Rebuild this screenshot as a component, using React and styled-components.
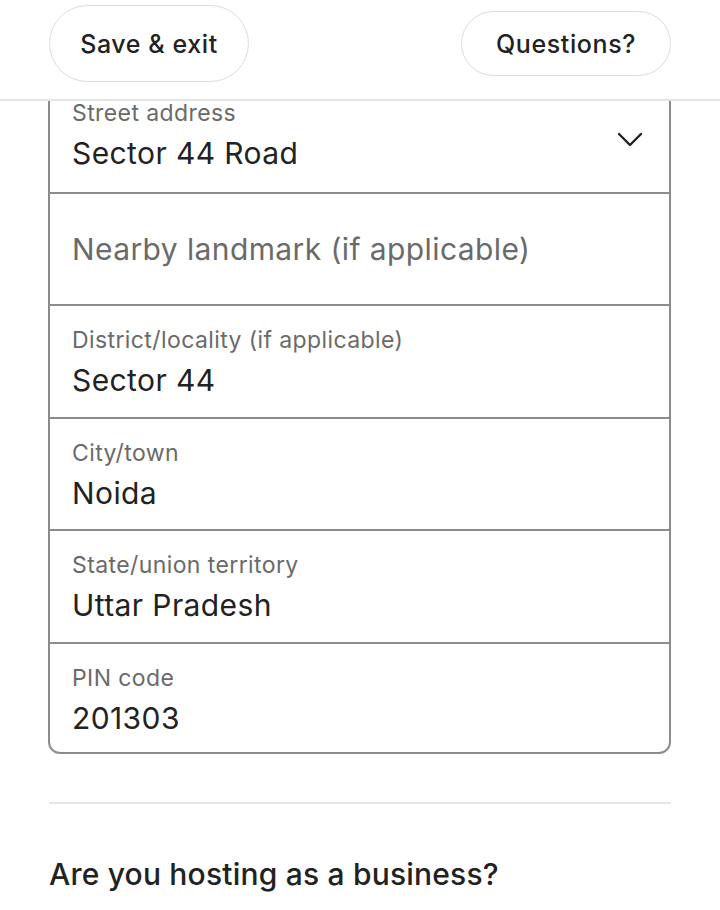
import React from "react";
import styled, { createGlobalStyle } from "styled-components";

const Global = createGlobalStyle`
  html, body { margin: 0; padding: 0; background: #fff; }
  body { font-family: "Inter", "Noto Sans", sans-serif; color: #222; }
  * { box-sizing: border-box; }
`;

const Page = styled.div`
  width: 720px;
  height: 910px;
  overflow: hidden;
  background: #fff;
  display: flex;
  flex-direction: column;
`;

const Header = styled.header`
  height: 101px;
  flex: none;
  display: flex;
  align-items: center;
  justify-content: space-between;
  padding: 0 49px 12px 49px;
  border-bottom: 2px solid #e4e4e4;
`;

const PillButton = styled.button`
  height: ${(p) => p.$h}px;
  width: ${(p) => p.$w}px;
  border: 1.5px solid #dcdcdc;
  border-radius: 40px;
  background: #fff;
  font-family: inherit;
  font-size: 25px;
  font-weight: 500;
  letter-spacing: 0.6px;
  color: #222;
  padding: 0;
`;

const Scroll = styled.div`
  flex: 1;
  overflow: hidden;
  padding: 0 49px 0 48px;
`;

const Content = styled.div`
  margin-top: -24px;
`;

const FormBox = styled.div`
  border: 2px solid #8c8c8c;
  border-radius: 12px;
  overflow: hidden;
`;

const Row = styled.div`
  position: relative;
  height: ${(p) => (p.$last ? 110 : 112.6)}px;
  border-top: ${(p) => (p.$first ? "none" : "2px solid #8c8c8c")};
  padding: 0 22px;
  display: flex;
  flex-direction: column;
  justify-content: ${(p) => (p.$placeholder ? "center" : "flex-start")};
`;

const Label = styled.div`
  margin-top: 21px;
  font-size: 23px;
  letter-spacing: 0.4px;
  color: #6a6a6a;
  line-height: 26px;
`;

const Value = styled.div`
  margin-top: 10px;
  font-size: 30px;
  letter-spacing: 0.4px;
  color: #222;
  line-height: 34px;
`;

const Placeholder = styled.div`
  font-size: 30px;
  letter-spacing: 0.4px;
  color: #6a6a6a;
  line-height: 34px;
`;

const Chevron = styled.svg`
  position: absolute;
  right: 26px;
  top: 53px;
  width: 26px;
  height: 16px;
`;

const Separator = styled.hr`
  margin: 48px 0 0 1px;
  border: none;
  border-top: 2px solid #e4e4e4;
  width: 622px;
`;

const Heading = styled.h2`
  margin: 50px 0 0 1px;
  font-size: 30px;
  font-weight: 500;
  letter-spacing: 0.2px;
  color: #222;
  line-height: 40px;
`;

const fields = [
  { label: "District/locality (if applicable)", value: "Sector 44" },
  { label: "City/town", value: "Noida" },
  { label: "State/union territory", value: "Uttar Pradesh" },
  { label: "PIN code", value: "201303" },
];

export default function App() {
  return (
    <>
      <Global />
      <Page>
        <Header>
          <PillButton $w={200} $h={77}>Save &amp; exit</PillButton>
          <PillButton $w={210} $h={65}>Questions?</PillButton>
        </Header>
        <Scroll>
          <Content>
            <FormBox>
              <Row $first>
                <Label>Street address</Label>
                <Value>Sector 44 Road</Value>
                <Chevron viewBox="0 0 26 16" fill="none">
                  <path d="M2 2 L13 13 L24 2" stroke="#222" strokeWidth="2.4" strokeLinecap="round" strokeLinejoin="round" />
                </Chevron>
              </Row>
              <Row $placeholder>
                <Placeholder>Nearby landmark (if applicable)</Placeholder>
              </Row>
              {fields.map((f, i) => (
                <Row key={f.label} $last={i === fields.length - 1}>
                  <Label>{f.label}</Label>
                  <Value>{f.value}</Value>
                </Row>
              ))}
            </FormBox>
            <Separator />
            <Heading>Are you hosting as a business?</Heading>
          </Content>
        </Scroll>
      </Page>
    </>
  );
}
